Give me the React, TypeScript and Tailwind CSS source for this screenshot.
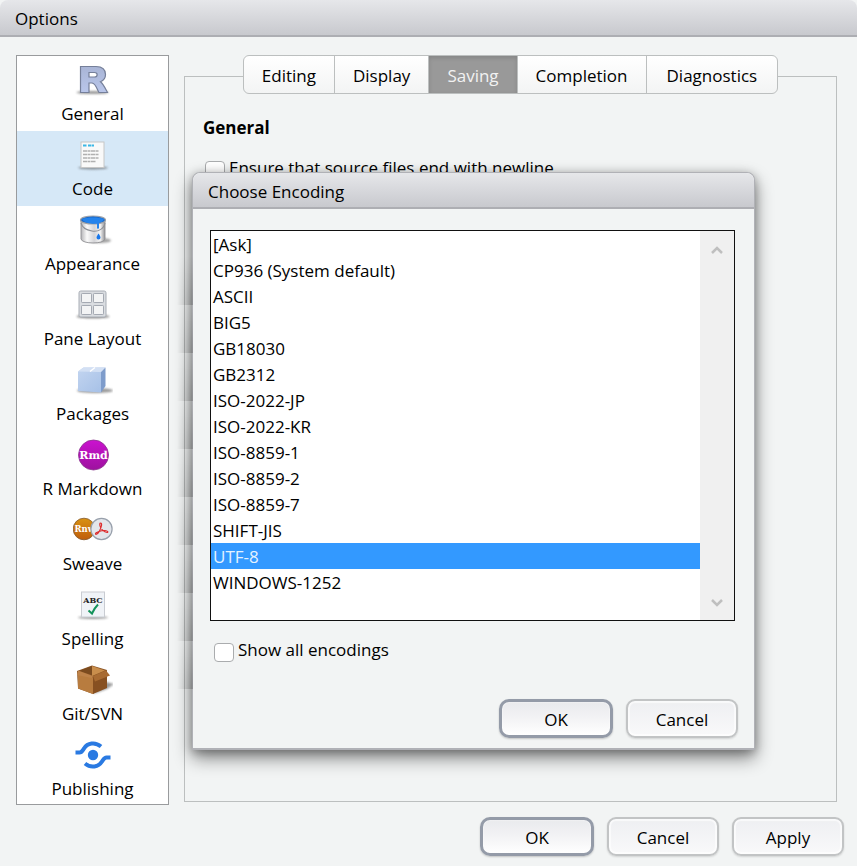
import React from "react";

const RIcon = () => (
  <svg viewBox="0 0 40 40" className="size-10" aria-hidden="true">
    <defs>
      <linearGradient id="rg" x1="0" y1="0" x2="0" y2="1"><stop offset="0" stopColor="#a9b5d6" /><stop offset="1" stopColor="#b9c6ea" /></linearGradient>
      <filter id="soft" x="-20%" y="-100%" width="140%" height="300%"><feGaussianBlur stdDeviation="0.8" /></filter>
    </defs>
    <ellipse cx="19.500" cy="32.500" rx="16" ry="1.600" fill="#555" opacity=".6" filter="url(#soft)" />
    <path d="M7.500 6.500H23c6 0 9.500 2.800 9.500 8 0 4-2.300 6.200-5 7.200 3 2.500 4.600 6.300 7 10.800h-8.500c-2.300-4-3.300-9-7-9.500h-3v9.500H7.500v-26Zm8.500 6V17h5.500c3.500 0 3.500-4.500 0-4.500H16Z" fill="url(#rg)" stroke="#757f99" strokeWidth="1.200" fillRule="evenodd" />
  </svg>
);

const CodeIcon = () => (
  <svg viewBox="0 0 40 40" className="size-10" aria-hidden="true">
    <ellipse cx="20" cy="32.800" rx="15" ry="1.600" fill="#444" opacity=".55" filter="url(#soft)" />
    <rect x="8" y="7" width="23" height="25.500" fill="#f9f9f9" stroke="#c6c6c6" />
    <path d="M10 10.500h4m1 0h6" stroke="#3bb7e6" strokeWidth="1.800" strokeDasharray="3.500 .5" />
    <path d="M10 16h16M10 19.500h16M10 23h16M10 26.500h13" stroke="#b0b0b0" strokeWidth="1.700" strokeDasharray="4 .5 3 .5" />
  </svg>
);

const BucketIcon = () => (
  <svg viewBox="0 0 40 40" className="size-10" aria-hidden="true">
    <defs><linearGradient id="bk" x1="0" x2="1"><stop offset="0" stopColor="#b5b5b8" /><stop offset=".25" stopColor="#fafafa" /><stop offset=".55" stopColor="#d4d4d7" /><stop offset=".8" stopColor="#f4f4f4" /><stop offset="1" stopColor="#929296" /></linearGradient></defs>
    <ellipse cx="27" cy="30.500" rx="11" ry="2.500" fill="#444" opacity=".5" filter="url(#soft)" />
    <path d="M8 9v20c1 5.300 23 5.300 24 0V9Z" fill="url(#bk)" stroke="#8e8e92" strokeWidth=".9" />
    <ellipse cx="20" cy="10" rx="12.500" ry="4" fill="#1767c9" stroke="#a0a3a8" strokeWidth="1.200" />
    <path d="M9 9c5-2 17-2 22 0-1 3-4 3.500-5 3.800v5c0 1.400-2 1.400-2 0v-4c-6 .4-13-.8-15-4.800Z" fill="#2483ec" />
    <path d="M25.500 23.500c1.400 2 2 3 2 4a2 2 0 0 1-4 0c0-1 .8-2 2-4Z" fill="#1776ea" />
    <path d="M8 13c1 4 5 7 11 8s12-2 13-8" fill="none" stroke="#8d9096" strokeWidth="1.100" />
  </svg>
);

const PaneIcon = () => (
  <svg viewBox="0 0 40 40" className="size-10" aria-hidden="true">
    <ellipse cx="20" cy="31.500" rx="16.500" ry="1.800" fill="#333" opacity=".6" filter="url(#soft)" />
    <rect x="6" y="6" width="27" height="26" rx="1.800" fill="#dadde1" stroke="#a9aeb6" />
    {[[8.5, 8.5], [20.5, 8.5], [8.5, 20.5], [20.5, 20.5]].map(([x, y]) => (
      <rect key={`${x}-${y}`} x={x} y={y} width="10" height="9" rx=".7" fill="#f3f4f5" stroke="#a4a9b2" />
    ))}
  </svg>
);

const PackageIcon = () => (
  <svg viewBox="0 0 40 40" className="size-10" aria-hidden="true">
    <defs><linearGradient id="pk" x1="0" y1="0" x2="1" y2="1"><stop offset="0" stopColor="#c3d5f0" /><stop offset="1" stopColor="#a4bfe6" /></linearGradient></defs>
    <ellipse cx="22" cy="30.500" rx="18" ry="2.500" fill="#444" opacity=".55" filter="url(#soft)" />
    <path d="M5 11.500 10.500 7.500h22L28 11.500v21L5 31Z" fill="url(#pk)" />
    <path d="M5 11.500 10.500 7.500h22L28 12Z" fill="#d3e0f4" />
    <path d="m28 12 4.500-4.500v18.500L28 32.500Z" fill="#7e9ccb" />
    <path d="m17 11.500 5-4" stroke="#fff" strokeWidth="1.500" />
  </svg>
);

const RmdIcon = () => (
  <svg viewBox="0 0 40 40" className="size-10" aria-hidden="true">
    <defs><linearGradient id="rm" x1="0" y1="0" x2="0" y2="1"><stop offset="0" stopColor="#cb12d0" /><stop offset="1" stopColor="#9d119e" /></linearGradient></defs>
    <circle cx="20.500" cy="20" r="15" fill="url(#rm)" stroke="#89358b" strokeWidth=".8" />
    <text x="20.500" y="24" textAnchor="middle" fontSize="12.500" fontWeight="bold" fill="#fff" fontFamily="DejaVu Serif, Liberation Serif, serif" textRendering="geometricPrecision">
      <tspan fontSize="11">Rmd</tspan>
    </text>
  </svg>
);

const SweaveIcon = () => (
  <svg viewBox="0 0 40 40" className="size-10" aria-hidden="true">
    <defs><linearGradient id="sw" x1="0" y1="0" x2="0" y2="1"><stop offset="0" stopColor="#d89213" /><stop offset="1" stopColor="#c05d0a" /></linearGradient></defs>
    <circle cx="11" cy="19" r="10.800" fill="url(#sw)" stroke="#83592d" strokeWidth=".8" />
    <text x="1.500" y="22" fontSize="8.500" fontWeight="bold" fill="#fff" fontFamily="DejaVu Serif, Liberation Serif, serif">Rnw</text>
    <circle cx="28.500" cy="19" r="10.600" fill="#e3e6eb" stroke="#98a0ac" strokeWidth="1.200" />
    <path d="M27.500 13c2 0 1 4-1 8-1.500 3-4 4-4 2.800 0-1.500 6-3.500 9.500-3.300 3 .2 3.500 2 2 2-3 0-6.500-4-7-6.500-.3-1.500-.3-3 .5-3Z" fill="none" stroke="#dd2c2d" strokeWidth="1.200" />
  </svg>
);

const SpellingIcon = () => (
  <svg viewBox="0 0 40 40" className="size-10" aria-hidden="true">
    <ellipse cx="20" cy="32.500" rx="15" ry="1.500" fill="#333" opacity=".5" filter="url(#soft)" />
    <rect x="8.500" y="7" width="23" height="25" fill="#f0f3f7" stroke="#c9ccd2" />
    <text x="20" y="17.500" textAnchor="middle" fontSize="8" fontWeight="bold" fill="#222" fontFamily="DejaVu Serif, Liberation Serif, serif">ABC</text>
    <path d="m15.500 25.500 3.500 3c2-4.500 3.500-6.500 6-9" fill="none" stroke="#13925a" strokeWidth="2" />
  </svg>
);

const GitIcon = () => (
  <svg viewBox="0 0 40 40" className="size-10" aria-hidden="true">
    <path d="m20 34 14-5 7-5-8-2Z" fill="#444" opacity=".55" filter="url(#soft)" />
    <path d="m4 11 15-5.500L34 10l-3 14.500L20 34 5 28.500Z" fill="#8b5525" />
    <path d="m6 11 13-5v9Z" fill="#7b4b1f" /><path d="m19 6 13 4.500L19 16Z" fill="#c98e4c" />
    <path d="m5 13 15 4.500V34L5 28.500Z" fill="#b87c3f" />
    <path d="m20 17.500 14-7V28l-14 6Z" fill="#875021" />
    <path d="M5 10.500 20 16l-1 2-15-3Z" fill="#be834a" />
    <path d="m20 16 13-5.500 4 5-15 6Z" fill="#a86b32" />
  </svg>
);

const PublishIcon = () => (
  <svg viewBox="0 0 40 40" className="size-10" aria-hidden="true" fill="none" stroke="#2a7ae2" strokeWidth="4">
    <circle cx="20" cy="20" r="5.200" fill="#2a7ae2" stroke="none" />
    <path d="M2.500 17.500h4c2.500 0 3-2 4.500-4 3.500-5.500 11-7 17-2" />
    <path d="M37.500 22.500h-4c-2.500 0-3 2-4.500 4-3.500 5.500-11 7-17 2" />
  </svg>
);

const sections = [
  { name: "General", Icon: RIcon },
  { name: "Code", Icon: CodeIcon },
  { name: "Appearance", Icon: BucketIcon },
  { name: "Pane Layout", Icon: PaneIcon },
  { name: "Packages", Icon: PackageIcon },
  { name: "R Markdown", Icon: RmdIcon },
  { name: "Sweave", Icon: SweaveIcon },
  { name: "Spelling", Icon: SpellingIcon },
  { name: "Git/SVN", Icon: GitIcon },
  { name: "Publishing", Icon: PublishIcon },
];

const tabs = ["Editing", "Display", "Saving", "Completion", "Diagnostics"];

const encodings = [
  "[Ask]", "CP936 (System default)", "ASCII", "BIG5", "GB18030", "GB2312", "ISO-2022-JP", "ISO-2022-KR",
  "ISO-8859-1", "ISO-8859-2", "ISO-8859-7", "SHIFT-JIS", "UTF-8", "WINDOWS-1252",
];

function DialogButton({ children, primary = false }: { children: string; primary?: boolean }) {
  return (
    <button
      className={
        primary
          ? "h-[39px] w-[114px] rounded-[10px] border-3 border-[#949ba8] bg-linear-to-b from-[#e9eaed] via-[#f3f3f5] to-white pt-0.5 shadow-[0_1px_2px_#0003,inset_0_0_2px_#fff]"
          : "h-[39px] w-[112px] rounded-[9px] border-2 border-[#c2c4c5] bg-linear-to-b from-[#eeeff2] to-[#f9f9fa] pt-0.5 shadow-[0_1px_2px_#0002,inset_0_0_1px_2px_#fffa]"
      }
    >
      {children}
    </button>
  );
}

const titleBar = "flex items-center border-b-2 border-[#adaeb3] bg-linear-to-b from-[#e6e7ea] to-[#c8c9ce] px-[15px] pt-[3px] font-normal";
const tick = "mt-[5px] h-[19px] w-5 shrink-0 appearance-none rounded-[4px] border border-[#aaacae] bg-white";

export default function App() {
  return (
    <main className="relative min-h-screen bg-[#f2f4f4] font-['Open_Sans','Noto_Sans',sans-serif] text-[17px] leading-6 text-black">
      <h1 className={`h-[37px] rounded-t-lg ${titleBar}`}>Options</h1>

      <div className="flex items-stretch gap-[15px] pt-[18px] pr-5 pl-4">
        <nav className="w-[153px] shrink-0 border border-[#999b9d] bg-white">
          {sections.map(({ name, Icon }) => (
            <button
              key={name}
              className={`flex h-[75px] w-full flex-col items-center gap-0.5 pt-1 last:h-[73px] ${name === "Code" ? "bg-[#d6e8f7]" : ""}`}
            >
              <Icon />
              <span>{name}</span>
            </button>
          ))}
        </nav>

        <section className="mt-[21px] mb-[3px] flex-1 border border-[#bcbfbf] px-[18px]">
          <div role="tablist" className="mx-auto -mt-[22px] flex h-[39px] w-fit overflow-hidden rounded-md border border-[#bcbfbf] bg-linear-to-b from-white to-[#f3f4f4]">
            {tabs.map((tab) => (
              <button
                key={tab}
                role="tab"
                aria-selected={tab === "Saving"}
                className={`border-l border-[#bcbfbf] px-[18px] pt-[3px] first:border-l-0 last:px-5 ${tab === "Saving" ? "bg-[#999] text-[#f2f2f2] shadow-[inset_0_2px_4px_#0002]" : ""}`}
              >
                {tab}
              </button>
            ))}
          </div>
          <h2 className="mt-[22px] font-bold">General</h2>
          <label className="mt-4 flex items-start gap-1 pl-0.5">
            <input type="checkbox" className={tick} />
            Ensure that source files end with newline
          </label>
        </section>
      </div>

      <footer className="flex justify-end gap-[13px] pt-3 pr-[13px]">
        <DialogButton primary>OK</DialogButton>
        <DialogButton>Cancel</DialogButton>
        <DialogButton>Apply</DialogButton>
      </footer>

      <div
        role="dialog"
        aria-label="Choose Encoding"
        className="absolute top-[172px] left-[192px] w-[563px] rounded-t-lg border border-b-2 border-[#b0b1b6] bg-[#f2f4f4] pb-[10px] shadow-[0_8px_18px_#0007,0_2px_10px_#0004]"
      >
        <div
          className="absolute top-[84px] bottom-[59px] right-full w-4 bg-[repeating-linear-gradient(to_bottom,#0000_0px,#0003_48px)] mask-[linear-gradient(to_left,#000,transparent)]"
          aria-hidden="true"
        />
        <h2 className={`h-[36px] rounded-t-lg ${titleBar}`}>Choose Encoding</h2>
        <div className="mt-[21px] mr-[19px] ml-[17px] flex h-[391px] border border-[#111] bg-white">
          <select size={14} aria-label="Encoding" defaultValue="UTF-8" className="h-full min-w-0 flex-1 appearance-none overflow-hidden border-0 bg-white p-0 outline-none">
            {encodings.map((name) => (
              <option
                key={name}
                value={name}
                className="h-[26px] px-0.5 pt-0.5 pb-0 leading-[26px] checked:bg-linear-to-b checked:from-[#3399ff] checked:to-[#3399ff] checked:[-webkit-text-fill-color:#e4f2ff]"
              >
                {name}
              </option>
            ))}
          </select>
          <div className="flex w-[34px] flex-col items-center justify-between bg-[#f0f0f0] py-3" aria-hidden="true">
            <svg viewBox="0 0 12 12" className="size-3" fill="none" stroke="#bfbfbf" strokeWidth="2.500"><path d="m1 10 5-5 5 5" /></svg>
            <svg viewBox="0 0 12 12" className="size-3" fill="none" stroke="#bfbfbf" strokeWidth="2.500"><path d="m1 4 5 5 5-5" /></svg>
          </div>
        </div>
        <label className="mt-[17px] ml-[21px] flex items-start gap-1">
          <input type="checkbox" className={tick} />
          Show all encodings
        </label>
        <div className="mt-[37px] mr-4 flex justify-end gap-[13px]">
          <DialogButton primary>OK</DialogButton>
          <DialogButton>Cancel</DialogButton>
        </div>
      </div>
    </main>
  );
}
